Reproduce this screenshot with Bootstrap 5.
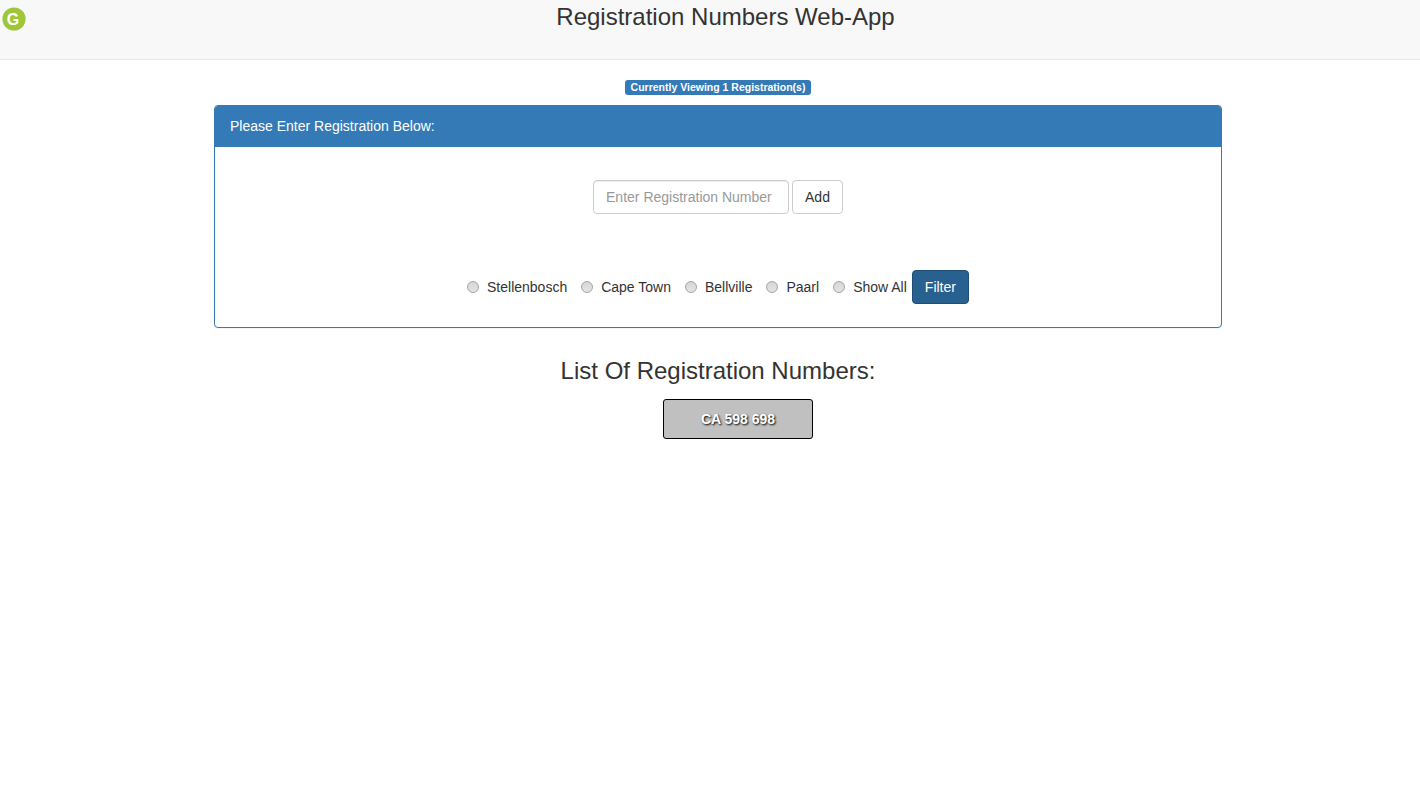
<!DOCTYPE html>
<html lang="en">
<head>
<meta charset="utf-8">
<meta name="viewport" content="width=device-width, initial-scale=1">
<title>Registration Numbers Web-App</title>
<link href="https://cdn.jsdelivr.net/npm/bootstrap@5.3.0/dist/css/bootstrap.min.css" rel="stylesheet">
<style>
  body { font-family: "Liberation Sans", Arial, sans-serif; font-size: 14px; line-height: 20px; color: #333; }
  .topbar { background: #f8f8f8; border-bottom: 1px solid #e7e7e7; min-height: 60px; padding-top: 4px; }
  .brand-mark { width: 31px; padding: 3px 0 0 2px; }
  .page-heading { font-size: 24px; line-height: 26px; font-weight: 400; }
  .count-label { line-height: 11px; padding: 2px 6px; border-radius: 3px; background: #337ab7; }
  .entry-card { max-width: 1008px; border: 1px solid #337ab7; border-radius: 4px; box-shadow: 0 1px 1px rgba(0,0,0,.05); margin-top: 10px; }
  .entry-card .card-header { background: #337ab7; color: #fff; padding: 10px 15px; border-bottom: 1px solid #337ab7; border-radius: 3px 3px 0 0; }
  .entry-card .card-body { padding: 33px 15px 23px; }
  .entry-card .btn, .entry-card .form-control { font-size: 14px; line-height: 20px; padding: 6px 12px; border-radius: 4px; }
  .entry-card .form-control { width: 196px; border-color: #ccc; color: #555; box-shadow: inset 0 1px 1px rgba(0,0,0,.075); }
  .entry-card .form-control::placeholder { color: #999; }
  .btn-add { background: #fff; border-color: #ccc; color: #333; }
  .btn-filter { background: #286090; border-color: #204d74; color: #fff; }
  .add-form { gap: 3px; margin-bottom: 56px; }
  .filter-form { gap: 14px; }
  .town { gap: 8px; }
  .show-filter { gap: 5px; }
  .town input { appearance: none; width: 12px; height: 12px; margin: 0; border: 1px solid #a5a5a5; border-radius: 50%; background: linear-gradient(#d6d6d6, #e4e4e4); }
  .town input:checked { box-shadow: inset 0 0 0 3px #e4e4e4; background: #444; }
  .list-heading { margin: 30px 0 15px; }
  .plates { padding-left: 40px; }
  .plate { width: 150px; height: 40px; background: #c0c0c0; border: 1px solid #000; border-radius: 3px; color: #fff; text-shadow: 1px 1px 2px #000; }
</style>
</head>
<body>
<header class="topbar d-flex align-items-start">
  <a class="brand-mark d-block" href="#" aria-label="Home">
    <svg class="d-block" width="24" height="24" viewBox="0 0 24 24" aria-hidden="true">
      <circle cx="12" cy="12" r="11.6" fill="#9fc63b"/>
      <text x="11" y="18" text-anchor="middle" font-size="16" font-weight="700" fill="#fff">G</text>
    </svg>
  </a>
  <h1 class="page-heading flex-grow-1 text-center mb-0">Registration Numbers Web-App</h1>
</header>
<main class="ps-3 d-flex flex-column align-items-center pt-3">
  <span class="badge count-label mt-1">Currently Viewing 1 Registration(s)</span>
  <section class="entry-card card w-100">
    <div class="card-header">Please Enter Registration Below:</div>
    <div class="card-body">
      <form class="add-form d-flex flex-wrap justify-content-center">
        <input type="text" class="form-control" placeholder="Enter Registration Number" aria-label="Registration number">
        <button type="button" class="btn btn-add">Add</button>
      </form>
      <form class="filter-form d-flex flex-wrap justify-content-center align-items-center">
        <label class="town d-flex align-items-center"><input type="radio" name="town">Stellenbosch</label>
        <label class="town d-flex align-items-center"><input type="radio" name="town">Cape Town</label>
        <label class="town d-flex align-items-center"><input type="radio" name="town">Bellville</label>
        <label class="town d-flex align-items-center"><input type="radio" name="town">Paarl</label>
        <div class="show-filter d-flex align-items-center">
          <label class="town d-flex align-items-center"><input type="radio" name="town">Show All</label>
          <button type="button" class="btn btn-filter">Filter</button>
        </div>
      </form>
    </div>
  </section>
  <h2 class="page-heading list-heading">List Of Registration Numbers:</h2>
  <ul class="plates list-unstyled d-flex flex-column align-items-center gap-2">
    <li class="plate d-flex align-items-center justify-content-center fw-bold">CA 598 698</li>
  </ul>
</main>
<script src="https://cdn.jsdelivr.net/npm/bootstrap@5.3.0/dist/js/bootstrap.bundle.min.js"></script>
</body>
</html>
